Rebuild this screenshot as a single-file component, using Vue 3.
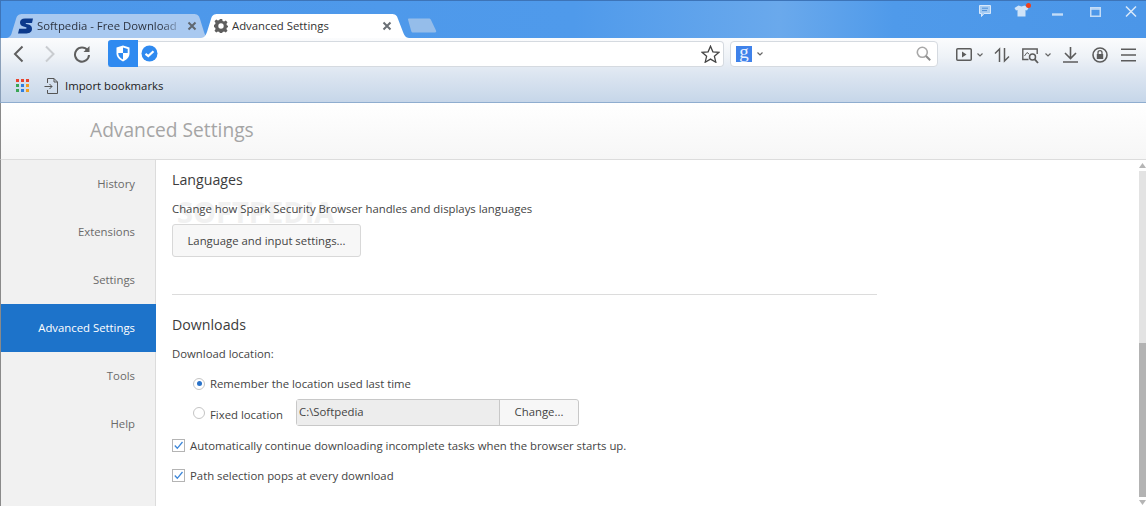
<script setup>
const sideItems = [
  { label: 'History' },
  { label: 'Extensions' },
  { label: 'Settings' },
  { label: 'Advanced Settings', active: true },
  { label: 'Tools' },
  { label: 'Help' },
]
</script>

<template>
  <div class="win">
    <div class="titlebar">
      <div class="tabs">
        <div class="tab tab-off">
          <svg class="tab-bg" width="202" height="25" viewBox="0 0 202 25"><path d="M0 25C4 25 6 23 7 19L11 6C12 2 14 1 18 1H188C192 1 194 2 195 6L199 19C200 22 201 24 202 25Z" fill="#a9c9f0"/></svg>
          <svg class="favicon" width="16" height="16" viewBox="0 0 16 16"><path d="M15 .5H7C3.500 .5 2 2.300 2 4.500C2 6.800 3.500 8 5.500 8.600L8 9.300C8.800 9.600 8.800 10.800 7.800 10.800H1.200L0 15.500H8.500C12 15.500 14 13.500 14 10.800C14 8.400 12.600 7.200 10.500 6.600L8.300 6C7.400 5.700 7.500 5 8.500 5H14Z" fill="#0c3a8c"/></svg>
          <span class="tab-text tab-text-fade">Softpedia - Free Download</span>
          <svg class="tab-x" width="10" height="10" viewBox="0 0 10 10"><path d="M1.500 1.500L8.500 8.500M8.500 1.500L1.500 8.500" stroke="#5f6770" stroke-width="2" fill="none"/></svg>
        </div>
        <div class="tab tab-on">
          <svg class="tab-bg" width="208" height="25" viewBox="0 0 208 25"><path d="M0 25C3 25 5 22 6 19L10 6C11 2 13 1 17 1H190C194 1 196 2 197 6L202 19C203 22 205 25 208 25Z" fill="#ffffff"/></svg>
          <svg class="favicon" width="14" height="14" viewBox="0 0 14 14"><path d="M5.800 0H8.200L8.600 2L10.100 2.600L11.800 1.500L13.500 3.200L12.400 4.900L13 6.400L14 6.800V8.200L13 8.600L12.400 10.100L13.500 11.800L11.800 13.500L10.100 12.400L8.600 13L8.200 14H5.800L5.400 13L3.900 12.400L2.200 13.500L.5 11.800L1.600 10.100L1 8.600L0 8.200V5.800L1 5.400L1.600 3.900L.5 2.200L2.200 .5L3.900 1.600L5.400 1ZM7 4.300A2.700 2.700 0 1 0 7 9.700A2.700 2.700 0 1 0 7 4.300Z" fill="#5e5e5e" fill-rule="evenodd"/></svg>
          <span class="tab-text">Advanced Settings</span>
          <svg class="tab-x" width="10" height="10" viewBox="0 0 10 10"><path d="M1.500 1.500L8.500 8.500M8.500 1.500L1.500 8.500" stroke="#6a6f75" stroke-width="2" fill="none"/></svg>
        </div>
        <svg class="newtab" width="30" height="15" viewBox="0 0 30 15"><path d="M1 1.500C1 .8 1.500 .5 2 .5H22C23 .5 23.500 1 24 2L29 12.500C29.500 13.500 29 14.500 28 14.500H6C5 14.500 4.600 14 4.200 13Z" fill="#95bdea"/></svg>
      </div>
      <div class="winctl">
        <svg width="14" height="13" viewBox="0 0 14 13"><path d="M1.500 .5H12.500V8.500H6L3.500 11.500V8.500H1.500Z" fill="#a5cbf2" stroke="#d8e8fa"/><path d="M4 3.200H10M4 5.600H9" stroke="#4c8fd8"/></svg>
        <span class="shirt">
          <svg width="15" height="12" viewBox="0 0 15 12"><path d="M4.500 .5L7.500 1.500L10.500 .5L14.500 3L13 5.500L11.500 5V11.500H3.500V5L2 5.500L.5 3Z" fill="#cfe3f8"/></svg>
          <i class="dot"></i>
        </span>
        <svg class="ctl-min" width="11" height="12" viewBox="0 0 11 12"><path d="M0 9.500H11" stroke="#c3dcf7" stroke-width="2.400"/></svg>
        <svg class="ctl-max" width="11" height="10" viewBox="0 0 11 10"><rect x=".75" y=".75" width="9.500" height="8.500" fill="none" stroke="#c3dcf7" stroke-width="1.500"/><path d="M1 2H10" stroke="#c3dcf7" stroke-width="1.500"/></svg>
        <svg class="ctl-close" width="12" height="11" viewBox="0 0 12 11"><path d="M1 .5L11 10.500M11 .5L1 10.500" stroke="#d8e8fa" stroke-width="1.500"/></svg>
      </div>
    </div>

    <div class="chrome">
      <div class="toolbar">
        <div class="nav">
          <svg width="12" height="18" viewBox="0 0 12 18"><path d="M10.500 1.500L3 9L10.500 16.500" fill="none" stroke="#5f5f5f" stroke-width="2"/></svg>
          <svg class="nav-fwd" width="12" height="18" viewBox="0 0 12 18"><path d="M2 1.500L9.500 9L2 16.500" fill="none" stroke="#c9ccd0" stroke-width="2"/></svg>
          <svg class="nav-reload" width="18" height="18" viewBox="0 0 18 18"><path d="M14.600 5.400A7 7 0 1 0 16 10" fill="none" stroke="#5f5f5f" stroke-width="2"/><path d="M16.500 1V7H10.500Z" fill="#5f5f5f"/></svg>
        </div>
        <div class="address">
          <div class="shield">
            <svg width="14" height="17" viewBox="0 0 14 17"><path d="M7 .5L13.500 2.500V8.500C13.500 12 10.500 15 7 16.500C3.500 15 .5 12 .5 8.500V2.500Z" fill="#fff"/><path d="M7 2.500L11.700 3.900V8H7ZM7 8V14.500C4.700 13.400 2.600 11.400 2.300 9V8Z" fill="#2f8af0"/></svg>
          </div>
          <svg class="verified" width="17" height="17" viewBox="0 0 17 17"><circle cx="8.500" cy="8.500" r="8" fill="#2f8af0"/><path d="M4.500 8.800L7.300 11L12.500 6.200" fill="none" stroke="#fff" stroke-width="2.200"/></svg>
          <svg class="star" width="19" height="18" viewBox="0 0 19 18"><path d="M9.500 1.200L11.900 6.800L18 7.300L13.400 11.300L14.800 17.200L9.500 14.100L4.200 17.200L5.600 11.300L1 7.300L7.100 6.800Z" fill="#fff" stroke="#444" stroke-width="1.300"/></svg>
        </div>
        <div class="search">
          <span class="g">g</span>
          <svg class="caret" width="6" height="4" viewBox="0 0 6 4"><path d="M.5 .5L3 3L5.500 .5" fill="none" stroke="#666" stroke-width="1.200"/></svg>
          <svg class="lens" width="15" height="15" viewBox="0 0 15 15"><circle cx="6.300" cy="6.300" r="5" fill="none" stroke="#a8a8a8" stroke-width="1.600"/><path d="M10 10L14.200 14.200" stroke="#8c8c8c" stroke-width="2"/></svg>
        </div>
        <div class="tools">
          <svg width="16" height="13" viewBox="0 0 16 13"><rect x=".75" y=".75" width="14.500" height="11.500" rx="1" fill="none" stroke="#5c5c5c" stroke-width="1.500"/><path d="M6 3.500V9.500L10.500 6.500Z" fill="#5c5c5c"/></svg>
          <svg class="mini" width="6" height="4" viewBox="0 0 6 4"><path d="M.5 .5L3 3L5.500 .5" fill="none" stroke="#666" stroke-width="1.200"/></svg>
          <svg class="t-updown" width="16" height="16" viewBox="0 0 16 16"><path d="M5.500 15V2L1 6.500M10.500 1V14L15 9.500" fill="none" stroke="#5c5c5c" stroke-width="1.500"/></svg>
          <svg class="t-snap" width="17" height="16" viewBox="0 0 17 16"><path d="M6.500 11.500H.8V1H15.200V6" fill="none" stroke="#5c5c5c" stroke-width="1.400"/><path d="M2.500 8L5 4.500L7 6" fill="none" stroke="#5c5c5c"/><circle cx="10.500" cy="9" r="3" fill="none" stroke="#5c5c5c" stroke-width="1.500"/><path d="M12.800 11.300L16 15" stroke="#5c5c5c" stroke-width="1.800"/></svg>
          <svg class="mini" width="6" height="4" viewBox="0 0 6 4"><path d="M.5 .5L3 3L5.500 .5" fill="none" stroke="#666" stroke-width="1.200"/></svg>
          <svg class="t-down" width="15" height="16" viewBox="0 0 15 16"><path d="M7.500 0V11M2 6L7.500 11.500L13 6M0 15H15" fill="none" stroke="#5c5c5c" stroke-width="1.600"/></svg>
          <svg class="t-lock" width="16" height="16" viewBox="0 0 16 16"><circle cx="8" cy="8" r="7" fill="none" stroke="#5c5c5c" stroke-width="1.600"/><rect x="4.800" y="7" width="6.400" height="5" fill="#5c5c5c"/><path d="M6 7V5.500C6 3 10 3 10 5.500V7" fill="none" stroke="#5c5c5c" stroke-width="1.300"/></svg>
          <svg class="t-menu" width="15" height="14" viewBox="0 0 15 14"><path d="M0 1.250H15M0 7H15M0 12.750H15" stroke="#5c5c5c" stroke-width="1.600"/></svg>
        </div>
      </div>
      <div class="bookmarks">
        <div class="apps">
          <i style="background:#e8442e"></i><i style="background:#e8442e"></i><i style="background:#e8442e"></i>
          <i style="background:#3aa655"></i><i style="background:#2f7fe0"></i><i style="background:#f0a020"></i>
          <i style="background:#3aa655"></i><i style="background:#2f7fe0"></i><i style="background:#f0a020"></i>
        </div>
        <svg class="import" width="15" height="16" viewBox="0 0 15 16"><path d="M3.500 5V.5H10L13.500 4V15.500H3.500V12" fill="none" stroke="#555"/><path d="M10 .5V4H13.500" fill="none" stroke="#555"/><path d="M.5 8.500H8M5.500 6L8 8.500L5.500 11" fill="none" stroke="#555"/></svg>
        <span class="bm-text">Import bookmarks</span>
      </div>
    </div>

    <header class="pagehead">Advanced Settings</header>

    <div class="body">
      <nav class="side">
        <div v-for="it in sideItems" :key="it.label" class="side-item" :class="{ active: it.active }">{{ it.label }}</div>
      </nav>
      <main class="content">
        <span class="watermark">SOFTPEDIA<sup>®</sup></span>
        <section class="sec sec-lang">
          <h2>Languages</h2>
          <p class="desc">Change how Spark Security Browser handles and displays languages</p>
          <button class="btn">Language and input settings...</button>
        </section>
        <section class="sec sec-dl">
          <h2>Downloads</h2>
          <p class="loc">Download location:</p>
          <div class="radio-row first">
            <span class="radio on"></span>
            <span>Remember the location used last time</span>
          </div>
          <div class="radio-row fixed">
            <span class="radio"></span>
            <span class="fixed-label">Fixed location</span>
            <div class="pathbox">
              <span class="pathval">C:\Softpedia</span>
              <span class="change">Change...</span>
            </div>
          </div>
          <div class="check-row auto">
            <svg class="check" width="13" height="13" viewBox="0 0 13 13"><rect x=".5" y=".5" width="12" height="12" fill="#fff" stroke="#b4b4b4"/><path d="M2.800 6.500L5.300 9.300L10.500 3" fill="none" stroke="#3d86d8" stroke-width="1.300"/></svg>
            <span>Automatically continue downloading incomplete tasks when the browser starts up.</span>
          </div>
          <div class="check-row path">
            <svg class="check" width="13" height="13" viewBox="0 0 13 13"><rect x=".5" y=".5" width="12" height="12" fill="#fff" stroke="#b4b4b4"/><path d="M2.800 6.500L5.300 9.300L10.500 3" fill="none" stroke="#3d86d8" stroke-width="1.300"/></svg>
            <span>Path selection pops at every download</span>
          </div>
        </section>
        <div class="scroll">
          <svg class="arrow" width="7" height="5" viewBox="0 0 7 5"><path d="M3.500 0L7 5H0Z" fill="#b5b5b5"/></svg>
          <div class="track"><div class="thumb"></div></div>
          <svg class="arrow" width="7" height="5" viewBox="0 0 7 5"><path d="M3.500 5L7 0H0Z" fill="#b5b5b5"/></svg>
        </div>
      </main>
    </div>
  </div>
</template>

<style>
html, body { margin: 0; padding: 0; background: #fff; overflow: hidden; }
</style>

<style scoped>
.win {
  width: 1146px; height: 506px; display: flex; flex-direction: column; overflow: hidden;
  font-family: "Open Sans", "Noto Sans", sans-serif; font-size: 11.350px; color: #444;
  box-sizing: border-box; position: relative;
}
.titlebar {
  height: 38px; flex: none; display: flex; justify-content: space-between; box-sizing: border-box;
  border-top: 1px solid #3d74b8; border-left: 1px solid #3d74b8;
  background: linear-gradient(90deg, #4c97ea 0, #4f9aeb 50%, #6aa9ec 68%, #4f9aea 78%, #4b96e8 100%);
}
.tabs { display: flex; align-items: flex-start; padding: 12px 0 0 4px; }
.tab { position: relative; height: 25px; display: flex; align-items: center; box-sizing: border-box; }
.tab-bg { position: absolute; left: 0; top: 0; }
.tab > *:not(.tab-bg) { position: relative; }
.tab-off { width: 202px; padding-left: 13px; }
.tab-on { width: 208px; margin-left: -6px; padding-left: 13px; }
.favicon { flex: none; }
.tab-text { margin-left: 3px; color: #333; white-space: nowrap; width: 146px; overflow: hidden; }
.tab-on .tab-text { margin-left: 4px; width: 150px; }
.tab-text-fade { color: #2d3440; -webkit-mask-image: linear-gradient(90deg, #000 85%, rgba(0,0,0,.25) 97%); mask-image: linear-gradient(90deg, #000 85%, rgba(0,0,0,.25) 97%); }
.tab-x { margin-left: 0; flex: none; }
.tab-off .tab-x { margin-left: 4px; }
.newtab { margin: 5px 0 0 -2px; }
.winctl { display: flex; align-items: flex-start; padding: 4px 0 0 8px; width: 176px; box-sizing: border-box; }
.winctl > * { flex: none; }
.shirt { position: relative; margin-left: 22px; width: 15px; height: 12px; display: block; }
.shirt svg { display: block; }
.dot { position: absolute; right: -2px; top: -2px; width: 5px; height: 5px; border-radius: 50%; background: #f0401a; }
.ctl-min { margin-left: 23px; }
.ctl-max { margin-left: 27px; margin-top: 2px; }
.ctl-close { margin-left: 24px; margin-top: 1px; }
.chrome { flex: none; height: 65px; box-sizing: border-box; border-bottom: 1px solid #8fadcf; border-left: 1px solid #8a9fb8;
  background: linear-gradient(180deg, #fbfcfd 0, #eef2f7 30%, #dde6f1 55%, #c6d6e9 100%); }
.toolbar { height: 31px; display: flex; align-items: center; }
.nav { display: flex; align-items: center; width: 107px; padding: 1px 0 0 11px; box-sizing: border-box; flex: none; }
.nav-fwd { margin-left: 20px; }
.nav-reload { margin-left: 17px; }
.address {
  width: 616px; height: 26px; box-sizing: border-box; flex: none; display: flex; align-items: center;
  background: #fff; border: 1px solid #d5dae0; border-left: 0; border-radius: 0 4px 4px 0;
}
.shield { width: 30px; height: 27px; margin-top: -1px; background: #2f8af0; border-radius: 3px 0 0 3px; display: flex; align-items: center; justify-content: center; }
.verified { margin-left: 3px; }
.star { margin-left: auto; margin-right: 3px; }
.search {
  margin-left: 6px; width: 208px; height: 26px; box-sizing: border-box; flex: none; display: flex; align-items: center;
  background: #fff; border: 1px solid #d5dae0; border-radius: 4px;
}
.g { width: 16px; height: 16px; margin-left: 5px; background: #3f82ea; color: #e8f0ff; font: 19px/12px "Liberation Serif", serif; text-align: center; }
.caret { margin-left: 5px; }
.lens { margin-left: auto; margin-right: 6px; }
.tools { display: flex; align-items: center; padding: 2px 0 0 18px; }
.mini { margin-left: 5px; }
.t-updown { margin-left: 11px; }
.t-snap { margin-left: 12px; margin-top: 2px; }
.tools .t-snap + .mini { margin-left: 6px; }
.t-down { margin-left: 12px; margin-top: 1px; }
.t-lock { margin-left: 14px; }
.t-menu { margin-left: 13px; }
.bookmarks { height: 33px; display: flex; align-items: center; padding-left: 15px; }
.apps { display: grid; grid-template-columns: repeat(3, 3px); grid-auto-rows: 3px; gap: 2px; }
.apps i { display: block; }
.import { margin-left: 15px; }
.bm-text { margin-left: 6px; color: #222; }
.pagehead {
  flex: none; height: 57px; box-sizing: border-box; padding-left: 89px; line-height: 54px;
  font-size: 19.200px; color: #a5a5a5; border-bottom: 1px solid #dcdcdc; border-left: 1px solid #8a8a8a;
  background: linear-gradient(180deg, #fff 0, #f6f6f6 100%);
}
.body { flex: 1; display: flex; min-height: 0; }
.side { width: 156px; flex: none; background: #f1f1f1; border-right: 1px solid #dcdcdc; border-left: 1px solid #8a8a8a; box-sizing: border-box; padding-top: 0; }
.side-item { height: 48px; line-height: 47px; text-align: right; padding-right: 20px; color: #6a6a6a; }
.side-item.active { background: #1d73ca; color: #fff; margin-right: -1px; padding-right: 21px; }
.content { flex: 1; position: relative; padding-left: 16px; }
.watermark { position: absolute; left: 21px; top: 31px; font-size: 29px; font-weight: 700; letter-spacing: 0; color: #f1f1f1; line-height: 34px; }
.watermark sup { font-size: 10px; font-weight: 400; }
.sec { position: relative; }
h2 { margin: 0; font-size: 14.200px; font-weight: 400; color: #3c3c3c; line-height: 20px; }
.sec-lang { height: 135px; box-sizing: border-box; width: 705px; padding-top: 10px; border-bottom: 1px solid #dcdcdc; }
.desc { margin: 10px 0 0; line-height: 18px; color: #444; position: relative; }
.btn {
  display: block; margin-top: 7px; height: 33px; width: 189px; padding: 0; font: inherit; color: #444;
  background: #f7f7f7; border: 1px solid #d8d8d8; border-radius: 3px; position: relative; top: -1px;
}
.sec-dl { padding-top: 20px; }
.loc { margin: 10px 0 0; line-height: 18px; }
.radio-row { display: flex; align-items: center; padding-left: 21px; }
.radio-row.first { margin-top: 12px; height: 17px; }
.radio-row.fixed { margin-top: 7px; height: 27px; }
.radio { width: 10px; height: 10px; border: 1px solid #c4c4c4; border-radius: 50%; background: #fff; position: relative; flex: none; margin-right: 5px; }
.radio.on::after { content: ""; position: absolute; left: 2.500px; top: 2.500px; width: 5px; height: 5px; border-radius: 50%; background: #2a72c8; }
.fixed-label { width: 86px; margin-top: 3px; }
.pathbox { display: flex; width: 283px; height: 27px; box-sizing: border-box; border: 1px solid #c8c8c8; border-radius: 3px; background: #f0f0f0; line-height: 24px; }
.pathval { width: 203px; box-sizing: border-box; padding-left: 2px; background: #ededed; border-right: 1px solid #c8c8c8; }
.change { flex: 1; text-align: center; background: #f7f7f7; border-radius: 0 3px 3px 0; }
.check-row { display: flex; align-items: center; height: 18px; }
.check { margin-right: 5px; flex: none; }
.check-row.auto { margin-top: 10px; }
.check-row.path { margin-top: 12px; }
.scroll { position: absolute; right: 0; top: 3px; bottom: 1px; width: 7px; display: flex; flex-direction: column; align-items: center; }
.arrow { flex: none; display: block; }
.track { flex: 1; width: 7px; margin: 3px 0; background: #e3e3e3; display: flex; flex-direction: column; justify-content: flex-end; }
.thumb { height: 154px; background: #b3b3b3; }
</style>
